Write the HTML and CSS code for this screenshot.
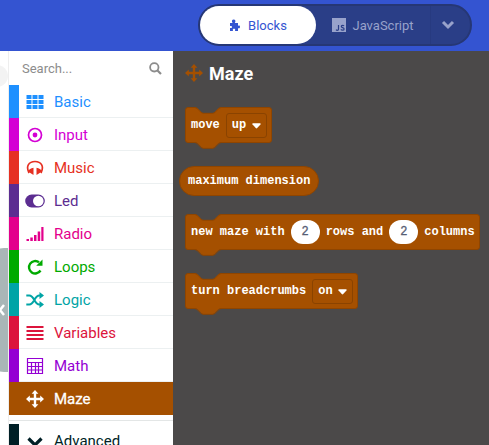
FILE: index.html
```html
<!DOCTYPE html>
<html lang="en">
<head>
<meta charset="utf-8">
<title>Maze blocks</title>
<link rel="stylesheet" href="styles.css">
</head>
<body>
<svg class="defs" aria-hidden="true">
  <symbol id="move" viewBox="0 0 18 18"><path d="M9 0l3.400 3.800h-2.200v4h4V5.600L18 9l-3.800 3.400v-2.200h-4v4h2.200L9 18l-3.400-3.800h2.200v-4h-4v2.200L0 9l3.800-3.400v2.200h4v-4H5.600z"/></symbol>
  <symbol id="chevron" viewBox="0 0 14 10"><path d="M2 2l5 5 5-5" fill="none" stroke="currentColor" stroke-width="3"/></symbol>
  <symbol id="caret" viewBox="0 0 10 6"><path d="M1.200 0h7.600q1.400.2.600 1.300L5.800 5.300q-.8.700-1.600 0L.6 1.300Q-.2.200 1.200 0z"/></symbol>
  <symbol id="notch" viewBox="0 0 26 7"><path class="notch-fill" d="M0 0h26c-3 0-6 6-8 6H8C6 6 3 0 0 0z"/><path class="notch-line" d="M0 .5c2.500 0 5.500 5.800 8 5.800h10c2.500 0 5.500-5.800 8-5.800"/></symbol>
  <symbol id="tab" viewBox="0 0 26 7"><path class="tab-fill" d="M0 0h26c-3 0-6 6-8 6H8C6 6 3 0 0 0z"/><path class="notch-line" d="M0 .5c2.500 0 5.500 5.800 8 5.800h10c2.500 0 5.500-5.800 8-5.800"/></symbol>
</svg>

<header class="topbar">
  <div class="switcher">
    <button class="mode mode-blocks" type="button">
      <svg class="icon-puzzle" viewBox="0 0 11 12"><path d="M1 4h2.600C2.300 2.300 3 .5 4.700.5S7 2.300 5.800 4H9v3c1-.8 2-.3 2 1s-1 1.800-2 1v3H6c.5-1.600.1-2.200-1-2.200s-1.500.6-1 2.200H1V9c1.500.3 2-.1 2-1s-.5-1.300-2-1z"/></svg>
      Blocks
    </button>
    <button class="mode mode-js" type="button">
      <svg class="icon-js" viewBox="0 0 14 14"><path d="M0 0h14v14H0z"/><path class="js-mark" d="M6.500 7v4.300q0 1-1.200 1-.8 0-1.200-.7M12 8q-.5-.7-1.500-.7-1.200 0-1.200 1.100 0 .8 1.300 1.200 1.500.5 1.500 1.300 0 1.300-1.500 1.300-1.200 0-1.700-.8"/></svg>
      JavaScript
    </button>
    <button class="mode mode-more" type="button" aria-label="More languages"><svg class="icon-chevron"><use href="#chevron"/></svg></button>
  </div>
</header>

<main class="editor">
  <div class="workspace">
    <span class="sim-knob"></span>
    <button class="sim-collapse" type="button" aria-label="Hide simulator"><svg viewBox="0 0 5 14"><path d="M4 2L0 7l4 5" fill="none" stroke="#fff" stroke-width="2.500"/></svg></button>
  </div>

  <nav class="toolbox">
    <label class="search">
      <input type="search" placeholder="Search..." aria-label="Search blocks">
      <svg viewBox="0 0 13 13"><path d="M8.500 8.500L12 12" stroke-width="2.200"/><circle cx="5.300" cy="5.300" r="4.200" stroke-width="1.800"/></svg>
    </label>
    <a class="cat basic" href="#basic"><svg viewBox="0 0 18 18"><path d="M.5 2h5v3.900h-5zm6 0h5v3.900h-5zm6 0h5v3.900h-5zM.5 7h5v3.900h-5zm6 0h5v3.900h-5zm6 0h5v3.900h-5zM.5 12h5v3.900h-5zm6 0h5v3.900h-5zm6 0h5v3.900h-5z"/></svg>Basic</a>
    <a class="cat input" href="#input"><svg viewBox="0 0 18 18"><circle cx="9" cy="9" r="6.500" fill="none" stroke="currentColor" stroke-width="1.700"/><circle cx="9" cy="9" r="2.400"/></svg>Input</a>
    <a class="cat music" href="#music"><svg viewBox="0 0 18 18"><path d="M3 14C-.5 7 3 2.500 9 2.500S18.500 7 15 14" fill="none" stroke="currentColor" stroke-width="1.700"/><path d="M7.500 8.700V16L2 12.500q1.500-3.300 5.500-3.800zm3 0V16l5.500-3.500q-1.500-3.300-5.500-3.800z"/></svg>Music</a>
    <a class="cat led" href="#led"><svg viewBox="0 0 20 18"><rect x=".2" y="2.500" width="19.600" height="13" rx="6.500"/><circle cx="13.300" cy="9" r="5.300" fill="#fff"/></svg>Led</a>
    <a class="cat radio" href="#radio"><svg viewBox="0 0 18 18"><path d="M.5 14h2.500v2H.5zM4.300 12.500h2.500V16H4.300zM8 10h2.500v6H8zM11.700 6.500h2.500V16h-2.500zM15.300 2h2.200v14h-2.200z"/></svg>Radio</a>
    <a class="cat loops" href="#loops"><svg viewBox="0 0 18 18"><path d="M14.500 12.500A6.200 6.200 0 1 1 13 4.300" fill="none" stroke="currentColor" stroke-width="2.400"/><path d="M16.500 1.500v6.300h-6.300z"/></svg>Loops</a>
    <a class="cat logic" href="#logic"><svg viewBox="0 0 18 18"><path d="M.3 4.500h3c5 0 5 9 10 9h1M.3 13.500h3c5 0 5-9 10-9h1" fill="none" stroke="currentColor" stroke-width="2"/><path d="M13.500 1l4.500 3.500L13.500 8zm0 9l4.500 3.500-4.500 3.500z"/></svg>Logic</a>
    <a class="cat variables" href="#variables"><svg viewBox="0 0 18 18"><path d="M.5 2h17v2H.5zm0 4h17v2H.5zm0 4h17v2H.5zm0 4h17v2H.5z"/></svg>Variables</a>
    <a class="cat math" href="#math"><svg viewBox="0 0 18 18"><path d="M1.500 1.500h15v15h-15zM1.500 5.500h15M1.500 9.500h15M1.500 13h15M5.500 5.500v11M9.500 5.500v11M12.500 5.500v11" fill="none" stroke="currentColor" stroke-width="1.200"/></svg>Math</a>
    <a class="cat maze" href="#maze" aria-current="true"><svg><use href="#move"/></svg>Maze</a>
    <hr class="divider">
    <a class="cat advanced" href="#advanced"><svg viewBox="0 0 18 18"><path d="M2.500 6.500L9 13l6.500-6.500" fill="none" stroke="currentColor" stroke-width="3.200"/></svg>Advanced</a>
  </nav>

  <section class="flyout">
    <h1><svg><use href="#move"/></svg>Maze</h1>

    <div class="block statement">
      <svg class="notch"><use href="#notch"/></svg>
      <label for="dir">move</label>
      <span class="dropdown"><select id="dir"><option>up</option><option>down</option><option>left</option><option>right</option></select><svg><use href="#caret"/></svg></span>
      <svg class="tab"><use href="#tab"/></svg>
    </div>

    <div class="block reporter">maximum dimension</div>

    <div class="block statement">
      <svg class="notch"><use href="#notch"/></svg>
      <label for="rows">new maze with</label>
      <input id="rows" type="text" inputmode="numeric" value="2">
      <label for="cols">rows and</label>
      <input id="cols" type="text" inputmode="numeric" value="2">
      <span>columns</span>
      <svg class="tab"><use href="#tab"/></svg>
    </div>

    <div class="block statement">
      <svg class="notch"><use href="#notch"/></svg>
      <label for="crumbs">turn breadcrumbs</label>
      <span class="dropdown"><select id="crumbs"><option>on</option><option>off</option></select><svg><use href="#caret"/></svg></span>
      <svg class="tab"><use href="#tab"/></svg>
    </div>
  </section>
</main>
</body>
</html>
```

FILE: styles.css
```css
* { box-sizing: border-box; }

body {
  margin: 0;
  height: 100vh;
  display: flex;
  flex-direction: column;
  overflow: hidden;
  font-family: Roboto, "Liberation Sans", sans-serif;
}

svg { fill: currentColor; flex: none; }
.defs { position: absolute; width: 0; height: 0; }
button, input, select { font: inherit; margin: 0; }

.topbar {
  flex: none;
  display: flex;
  justify-content: flex-end;
  padding: 4px 17px 5px;
  background: #3454d1;
}

.switcher {
  display: flex;
  height: 42px;
  border: 2px solid #263775;
  border-radius: 21px;
  background: #2a3e87;
}

.mode {
  display: flex;
  align-items: center;
  justify-content: center;
  padding: 0;
  border: 0;
  background: none;
  color: #98a2cb;
  font-size: 13px;
}
.mode-blocks { width: 116px; gap: 8px; border-radius: 19px; background: #fff; color: #3454d1; }
.mode-js { width: 114px; gap: 6px; }
.mode-more { width: 40px; padding-right: 6px; border-left: 1px solid #273a80; }
.icon-puzzle { width: 11px; height: 12px; }
.icon-js { width: 14px; height: 14px; }
.js-mark { fill: none; stroke: #2a3e87; stroke-width: 1.2; }
.icon-chevron { width: 14px; height: 10px; }

.editor { flex: 1; min-height: 0; display: flex; }

.workspace {
  flex: none;
  width: 9px;
  overflow: hidden;
  border-right: 1px solid #eee;
  background: #fff;
  display: flex;
  flex-direction: column;
  align-items: flex-end;
}
.sim-knob { flex: none; width: 22px; height: 22px; margin-top: 14px; border-radius: 50%; background: #f3f3f3; }
.sim-collapse {
  flex: none;
  display: flex;
  align-items: center;
  justify-content: flex-start;
  width: 20px;
  height: 124px;
  margin-top: 161px;
  padding: 0 0 0 12px;
  border: 0;
  border-radius: 16px 0 0 16px;
  background: #a9b6b7;
}
.sim-collapse svg { width: 5px; height: 14px; }

.toolbox { flex: none; width: 164px; overflow: hidden; background: #fff; }

.search { display: flex; align-items: center; height: 34px; padding: 0 11px 0 13px; color: #8c8c8c; }
.search input { flex: 1; min-width: 0; padding: 0; border: 0; outline: 0; background: none; font-size: 13px; }
.search input::placeholder { color: #8c8c8c; }
.search svg { width: 13px; height: 13px; fill: none; stroke: currentColor; }

.cat {
  display: flex;
  align-items: center;
  gap: 10px;
  height: 33px;
  padding-left: 7px;
  border-left: 10px solid currentColor;
  box-shadow: inset 0 -1px #ecf0f1;
  font-size: 15px;
  text-decoration: none;
}
.cat svg { width: 18px; height: 18px; }
.cat.led svg { width: 20px; margin: 0 -1px; }
.basic { color: #1e90ff; }
.input { color: #d400d4; }
.music { color: #e63022; }
.led { color: #5c2d91; }
.radio { color: #e3008c; }
.loops { color: #00aa00; }
.logic { color: #00a4a6; }
.variables { color: #dc143c; }
.math { color: #9400d3; }
.maze { border-left-color: #a55000; background: #a55000; box-shadow: none; color: #fff; -webkit-text-stroke: 0.3px #fff; }
.advanced { color: #001f26; }
.divider { margin: 5px 0 3px; border: 0; border-top: 1px solid #e3e6e6; }

.flyout {
  flex: 1;
  display: flex;
  flex-direction: column;
  align-items: flex-start;
  gap: 18px;
  padding: 12px 8px 12px 12px;
  background: #4b4949;
  color: #fff;
}

h1 {
  display: flex;
  align-items: center;
  gap: 6px;
  height: 20px;
  margin: 0 0 6px;
  font-size: 18px;
  font-weight: 700;
}
h1 svg { width: 18px; height: 18px; color: #a55000; }

.block {
  position: relative;
  display: flex;
  align-items: center;
  gap: 6px;
  border: 1px solid #8f4500;
  background: #a55000;
  font: bold 12px "Liberation Mono", monospace;
  white-space: nowrap;
}
.statement { height: 36px; margin-bottom: 5px; padding: 0 4px 0 5px; border-radius: 3px; }
.reporter { height: 30px; margin-left: -6px; padding: 0 8px; border-radius: 15px; }

.notch, .tab { position: absolute; left: 9px; width: 26px; height: 7px; }
.notch { top: -1px; }
.tab { top: 34px; }
.notch-fill { fill: #4b4949; }
.tab-fill { fill: #a55000; }
.notch-line { fill: none; stroke: #8f4500; }

.dropdown { position: relative; display: flex; }
.dropdown select {
  appearance: none;
  width: 41px;
  height: 25px;
  padding: 0 0 0 5px;
  border: 1px solid #8a4300;
  border-radius: 3px;
  background: none;
  color: #fff;
}
.dropdown svg { position: absolute; right: 6px; top: 10px; width: 9px; height: 6px; pointer-events: none; }

.block input {
  width: 29px;
  height: 24px;
  padding: 0;
  border: 0;
  border-radius: 12px;
  background: #fff;
  color: #575e75;
  text-align: center;
  font-weight: 400;
  -webkit-text-stroke: 0.3px #575e75;
}
```
